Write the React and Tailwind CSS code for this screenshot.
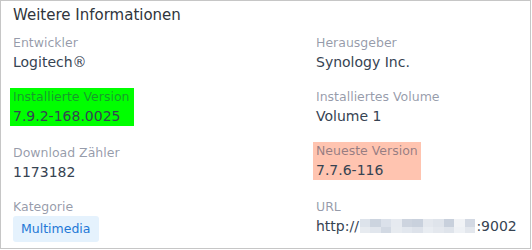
const mosaicTop = ['#dde3eb', '#ccd4df', '#dbe1ea', '#e6eaf0', '#cdd4df', '#c9d1dd', '#e4e8ee', '#dfe4eb', '#c8d0dc', '#f1f3f6', '#d3d9e3'];
const mosaicBottom = ['#e7ebf0', '#e1e6ed', '#d2d9e3', '#e7ebf0', '#e2e7ee', '#dde2ea', '#e9edf2', '#e4e8ee', '#dfe4eb', '#eef1f5', '#e3e7ed'];

const Field = ({ label, children, highlight }) => (
  <div className="mb-[16px]">
    <div className={highlight ? `inline-block -ml-[3px] pl-[3px] ${highlight}` : ''}>
      <div className="h-[18px] leading-[18px] text-[12.5px] text-[rgba(45,55,85,0.5)]">{label}</div>
      <div className="h-[20px] leading-[20px] text-[14px] text-[#364352]">{children}</div>
    </div>
  </div>
);

export default function App() {
  return (
    <div className="w-[531px] h-[249px] border border-[#c6c6c6] bg-white px-[12px] pt-[4px] font-['DejaVu_Sans',sans-serif]">
      <div className="h-[20px] leading-[20px] text-[15px] text-[#30353c]">Weitere Informationen</div>
      <div className="mt-[9px] grid grid-cols-[3fr_2fr]">
        <div>
          <Field label="Entwickler">Logitech®</Field>
          <Field label="Installierte Version" highlight="bg-[#00ff00] pr-[5px]">7.9.2-168.0025</Field>
          <Field label="Download Zähler">1173182</Field>
          <div>
            <div className="h-[18px] leading-[18px] text-[12.5px] text-[rgba(45,55,85,0.5)]">Kategorie</div>
            <span className="inline-flex h-[26px] items-center rounded-[3px] bg-[#e5f2fd] px-[8px] text-[12.5px] text-[#1f78d6]">
              Multimedia
            </span>
          </div>
        </div>
        <div>
          <Field label="Herausgeber">Synology Inc.</Field>
          <Field label="Installiertes Volume">Volume 1</Field>
          <Field label="Neueste Version" highlight="bg-[#ffc4b0] pr-[3px]">7.7.6-116</Field>
          <Field label="URL">
            <span className="inline-flex items-center">
              http://
              <span className="mx-[1px] inline-flex flex-col">
                <span className="flex">
                  {mosaicTop.map((c, i) => (
                    <span key={i} className="h-[8px] w-[10.5px]" style={{ backgroundColor: c }} />
                  ))}
                </span>
                <span className="flex">
                  {mosaicBottom.map((c, i) => (
                    <span key={i} className="h-[6px] w-[10.5px]" style={{ backgroundColor: c }} />
                  ))}
                </span>
              </span>
              :9002
            </span>
          </Field>
        </div>
      </div>
    </div>
  );
}
